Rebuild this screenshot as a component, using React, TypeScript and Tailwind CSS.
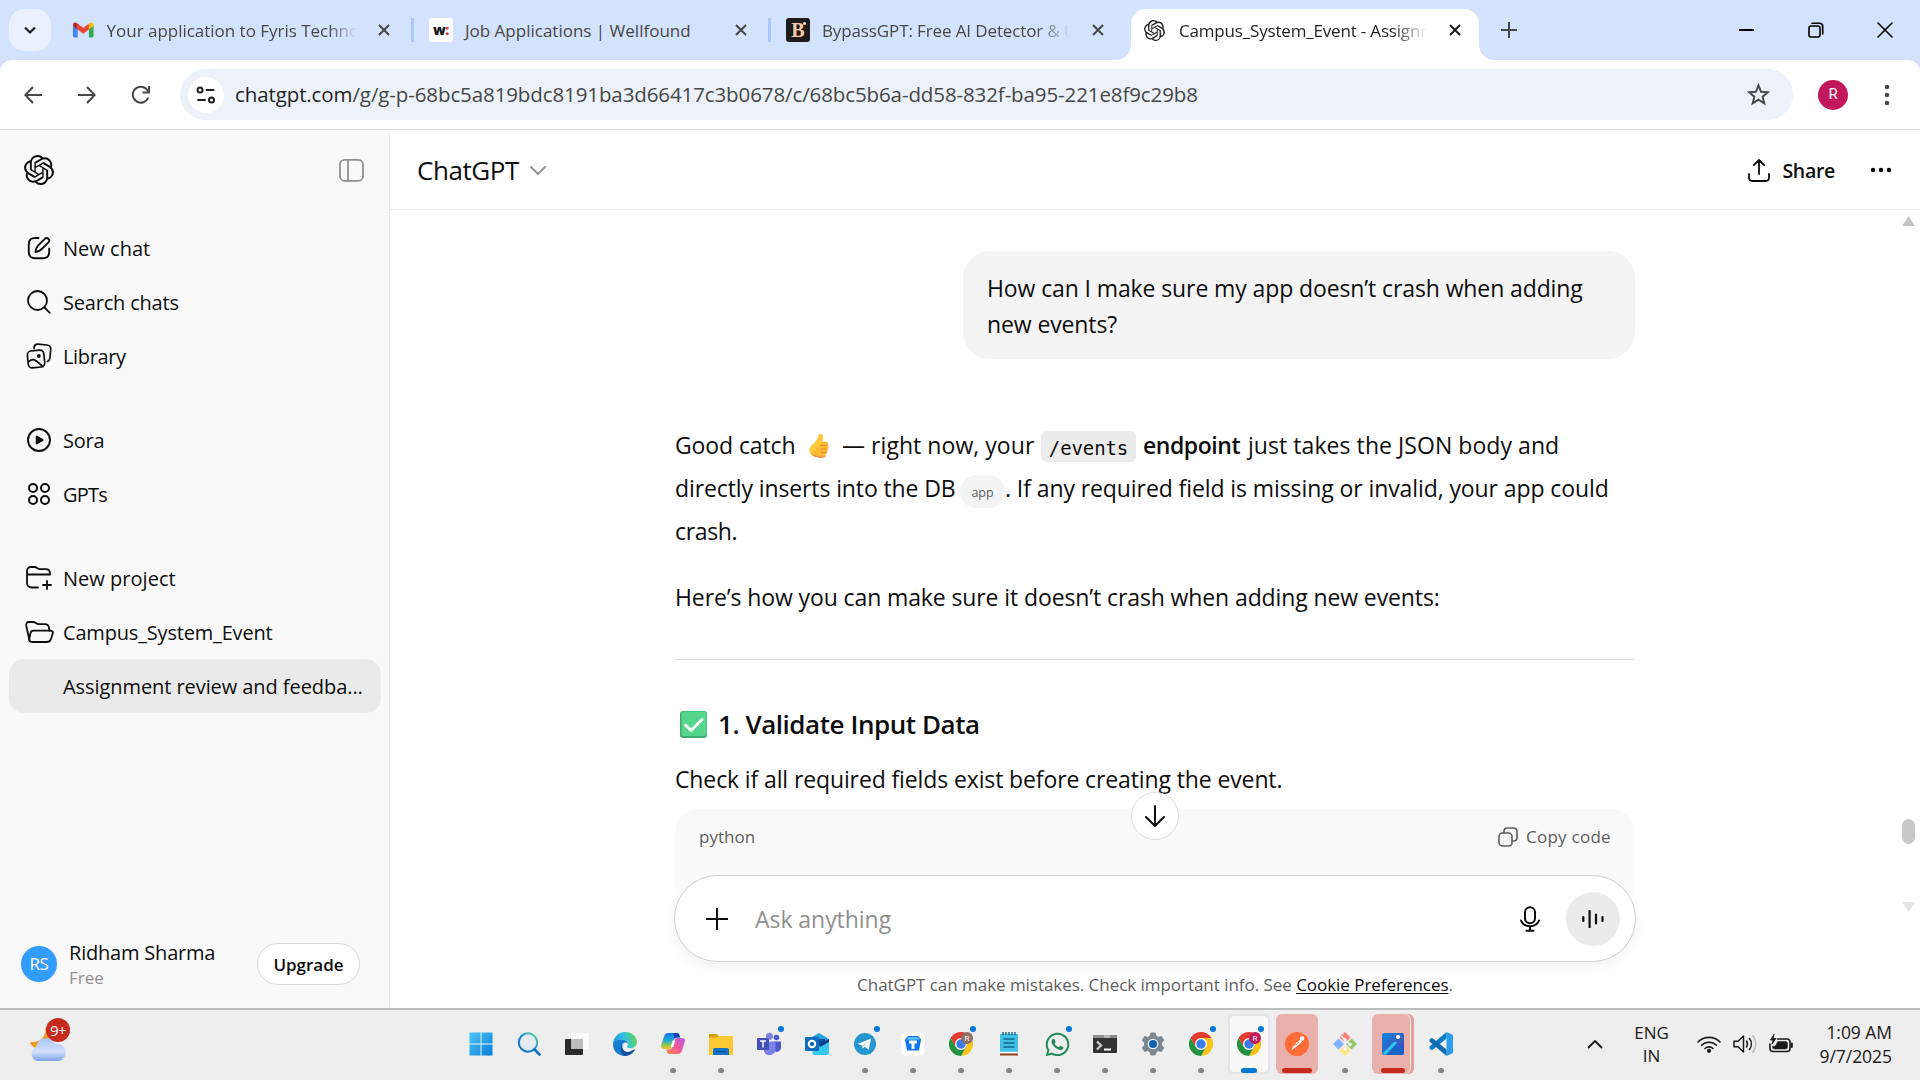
import React from 'react';
import { SiOpenai } from 'react-icons/si';
import { FaWhatsapp } from 'react-icons/fa';

type IconProps = { className?: string; children?: React.ReactNode; box?: string; sw?: number };

function Svg({ className, children, box = '0 0 24 24', sw = 2 }: IconProps) {
  return (
    <svg viewBox={box} className={`block shrink-0 ${className ?? ''}`} fill="none" stroke="currentColor" strokeWidth={sw} strokeLinecap="round" strokeLinejoin="round">
      {children}
    </svg>
  );
}

/* ---------- browser chrome ---------- */

const Cross = ({ className }: { className: string }) => (
  <Svg className={`size-3 ${className}`} box="0 0 12 12" sw={2}>
    <path d="M1 1l10 10M11 1L1 11" strokeLinecap="butt" />
  </Svg>
);

const Gmail = () => (
  <svg viewBox="0 0 22 16" className="block h-4 w-[22px]">
    <path d="M0 3v11.5C0 15.3.7 16 1.5 16H5V7z" fill="#4285f4" />
    <path d="M22 3v11.500C22 15.300 21.300 16 20.500 16H17V7z" fill="#34a853" />
    <path d="M5 1.200V7.500l6 4.500 6-4.500V1.200l-6 4.500z" fill="#ea4335" />
    <path d="M17 1.200V7.500l5-3.700V2.200C22 .200 19.800-.700 18.200.400z" fill="#fbbc04" />
    <path d="M0 2.200v1.600l5 3.700V1.200L3.800.400C2.200-.700 0 .200 0 2.200z" fill="#c5221f" />
  </svg>
);

function TabStrip() {
  return (
    <div className="flex h-[60px] bg-[#d3e3fd] pl-[9px] pt-[9px]">
      <div className="flex size-[42px] items-center justify-center rounded-[15px] bg-[#e9f0fe] text-[#1f1f1f]">
        <Svg className="h-2 w-3" box="0 0 12 8" sw={2.200}><path d="M1 1.500l5 5 5-5" strokeLinecap="butt" /></Svg>
      </div>
      <div className="ml-[22px] flex h-[42px] w-[341px] items-center text-[#474747]">
        <Gmail />
        <span className="ml-[13px] w-[254px] pt-0.5 whitespace-nowrap text-[17px] tracking-[-0.020px] [mask-image:linear-gradient(to_right,#000_88%,transparent_99%)]">Your application to Fyris Techno</span>
        <Cross className="ml-[19px]" />
        <span className="ml-[21px] h-6 w-[3px] bg-[#a8c7fa]" />
      </div>
      <div className="ml-[15px] flex h-[42px] w-[342px] items-center text-[#474747]">
        <span className="flex size-6 items-center justify-center rounded-[3px] bg-white text-[14px] leading-none font-extrabold tracking-[-0.500px] text-[#111]">w<span className="text-[#ec2e3a]">:</span></span>
        <span className="ml-3 w-[250px] pt-0.5 whitespace-nowrap text-[17px]">Job Applications | Wellfound</span>
        <Cross className="ml-5" />
        <span className="ml-[21px] h-6 w-[3px] bg-[#a8c7fa]" />
      </div>
      <div className="ml-[15px] flex h-[42px] w-[336px] items-center text-[#474747]">
        <span className="relative flex size-6 items-center justify-center rounded-[3px] bg-[#1d1b1c] font-['Liberation_Serif'] text-[20px] leading-none font-bold text-[#fbc8a5]">B<span className="absolute top-1 right-1 size-[3px] rounded-full bg-[#fbe0b0]" /></span>
        <span className="ml-3 w-[251px] pt-0.5 whitespace-nowrap text-[17px] tracking-[-0.120px] [mask-image:linear-gradient(to_right,#000_85%,transparent_99%)]">BypassGPT: Free AI Detector &amp; U</span>
        <Cross className="ml-[19px]" />
      </div>
      <div className="relative ml-[9px] flex h-[51px] w-[348px] rounded-t-[15px] bg-white text-[#1f1f1f]">
        <span className="absolute bottom-0 -left-[15px] size-[15px] bg-[radial-gradient(circle_at_0_0,#d3e3fd_14.500px,#fff_15px)]" />
        <span className="absolute -right-[15px] bottom-0 size-[15px] bg-[radial-gradient(circle_at_100%_0,#d3e3fd_14.500px,#fff_15px)]" />
        <div className="flex h-[42px] items-center">
          <SiOpenai className="ml-[13px] size-[21px]" />
          <span className="ml-[14px] w-[251px] pt-0.5 whitespace-nowrap text-[17px] tracking-[-0.180px] [mask-image:linear-gradient(to_right,#000_85%,transparent_99%)]">Campus_System_Event - Assignn</span>
          <Cross className="ml-[19px]" />
        </div>
      </div>
      <div className="ml-[22px] flex h-[42px] items-center text-[#474747]">
        <Svg className="size-4" box="0 0 16 16" sw={2}><path d="M8 0v16M0 8h16" strokeLinecap="butt" /></Svg>
      </div>
      <div className="mr-[27px] ml-auto flex h-[42px] items-center text-black">
        <span className="h-0.5 w-[15px] bg-black" />
        <Svg className="ml-[54px] size-4" box="0 0 16 16" sw={1.600}>
          <rect x="1" y="4" width="11" height="11" rx="2" />
          <path d="M4 1.200h7.500a3.200 3.200 0 0 1 3.200 3.200V12" />
        </Svg>
        <Svg className="ml-[53px] size-4" box="0 0 16 16" sw={1.600}><path d="M1 1l14 14M15 1L1 15" /></Svg>
      </div>
    </div>
  );
}

function Toolbar() {
  return (
    <div className="border-b border-white bg-[#d3e3fd]">
      <div className="flex h-[70px] items-center rounded-t-xl border-b border-[#dddddd] bg-white text-[#474747]">
        <Svg className="ml-6 size-[18px]" box="0 0 18 18" sw={2}><path d="M18 9H1.500M9 1L1.300 9 9 17" strokeLinecap="butt" strokeLinejoin="miter" /></Svg>
        <Svg className="ml-9 size-[18px]" box="0 0 18 18" sw={2}><path d="M0 9h16.500M9 1l7.700 8L9 17" strokeLinecap="butt" strokeLinejoin="miter" /></Svg>
        <Svg className="ml-9 size-[18px]" box="0 0 18 18" sw={2}>
          <path d="M16.300 11.500A8 8 0 1 1 15.500 4.300L17 6" strokeLinecap="butt" />
          <path d="M17 0v6.500h-6.500" strokeLinecap="butt" strokeLinejoin="miter" />
        </Svg>
        <div className="ml-[30px] flex h-[51px] w-[1613px] items-center rounded-full bg-[#ecf1fa]">
          <span className="ml-2 flex size-9 items-center justify-center rounded-full bg-white text-[#1f1f1f]">
            <Svg className="h-[18px] w-5" box="0 0 20 18" sw={2}>
              <circle cx="4" cy="4" r="2.500" /><path d="M10.500 4h7M2 14h7" /><circle cx="15.500" cy="14" r="2.500" />
            </Svg>
          </span>
          <span className="ml-[11px] text-[20.500px] tracking-[-0.105px] whitespace-nowrap text-[#474747]"><span className="text-[#1f1f1f]">chatgpt.com</span>/g/g-p-68bc5a819bdc8191ba3d66417c3b0678/c/68bc5b6a-dd58-832f-ba95-221e8f9c29b8</span>
          <Svg className="mr-[23px] ml-auto size-[23px]" box="0 0 24 24" sw={2}>
            <path d="M12 2.500l2.700 6.700 7.100.500-5.500 4.600 1.800 7L12 17.400l-6.100 3.900 1.800-7-5.500-4.600 7.100-.500z" strokeLinejoin="miter" />
          </Svg>
        </div>
        <span className="ml-[25px] flex size-[30px] items-center justify-center rounded-full bg-[#c2185b] font-['Roboto'] text-[15px] text-white">R</span>
        <svg viewBox="0 0 6 22" className="ml-9 h-[22px] w-1.5" fill="#474747"><circle cx="3" cy="3" r="2.300" /><circle cx="3" cy="11" r="2.300" /><circle cx="3" cy="19" r="2.300" /></svg>
      </div>
    </div>
  );
}

/* ---------- sidebar ---------- */

const EditIcon = () => (
  <Svg className="size-6" sw={1.900}>
    <path d="M11.500 2H8C4 2 1.800 4 1.800 8v8c0 4 2.200 6.200 6.200 6.200h8c4 0 6.200-2.200 6.200-6.200v-3.500" />
    <path d="M8.500 16c.200-3 .900-4.700 2.500-6.300l6.800-6.900a2.500 2.500 0 0 1 3.600 3.600l-6.900 6.800C12.900 14.800 11.300 15.700 8.500 16z" />
  </Svg>
);
const SearchIcon = () => (<Svg className="size-6" sw={1.800}><circle cx="10.500" cy="10.500" r="9.500" /><path d="M17.500 17.500l5.300 5.300" /></Svg>);
const LibraryIcon = () => (
  <Svg className="size-[26px]" box="0 0 26 26" sw={1.700}>
    <rect x="1.800" y="7.500" width="16.500" height="17" rx="4" transform="rotate(-6 10 16)" />
    <path d="M3 18.500c2.500-2.500 5.500-2.200 8 0l6 5M8 5.500V4.500C8.400 2 9.800 1 12 1.200l9 .8c3 .3 4 2 3.700 5l-.8 8c-.2 1.800-1 3-2.500 3.500" />
    <circle cx="12.800" cy="13" r="1.100" fill="currentColor" />
  </Svg>
);
const SoraIcon = () => (<Svg className="size-6" sw={1.900}><circle cx="12" cy="12" r="11" /><path d="M9.700 8.500v7l6-3.500z" fill="currentColor" /></Svg>);
const GptsIcon = () => (
  <Svg className="size-6" sw={2}><circle cx="6" cy="6" r="4" /><circle cx="18" cy="6" r="4" /><circle cx="6" cy="18" r="4" /><circle cx="18" cy="18" r="4" /></Svg>
);
const NewProjectIcon = () => (
  <Svg className="size-[26px]" box="0 0 26 26" sw={1.800}>
    <path d="M12 22.500H6c-3 0-5-1.500-5-4.500V6c0-2.500 1.500-4 4-4h3.500c1.500 0 2 .500 3 1.300 1 .700 1.500.900 3 .900h5c3 0 4.500 1.500 4.500 4.300V9.500H1" />
    <path d="M21 16v8M17 20h8" />
  </Svg>
);
const FolderIcon = () => (
  <Svg className="h-[22px] w-[29px]" box="0 0 29 22" sw={1.800}>
    <path d="M4.500 19.500L1.200 4.500C.900 2.500 2 1 4 1h4c1.500 0 2 .400 3 1.100 1 .800 1.800 1 3 1h6c2.500 0 3.600 1.300 4 3.500l.500 3" />
    <path d="M8.500 9.600h16.800c2 0 2.900 1.200 2.400 2.900l-1.700 5.500c-.700 2.100-1.900 3-4 3H7.500c-2.500 0-3.700-1.400-3.200-3.500l1.200-5.400c.400-1.700 1.300-2.500 3-2.500z" />
  </Svg>
);

function Item({ icon, label, gap, track }: { icon?: React.ReactNode; label: string; gap?: string; track?: string }) {
  return (
    <div className={`flex h-[54px] items-center ${gap ?? ''}`}>
      <span className="ml-[23px] flex w-8 justify-center text-[#0d0d0d]">{icon}</span>
      <span className={`ml-2 pt-px text-[20px] whitespace-nowrap text-[#0d0d0d] ${track ?? 'tracking-[-0.200px]'}`}>{label}</span>
    </div>
  );
}

function Sidebar() {
  return (
    <aside className="flex h-[877px] w-[390px] flex-col border-r border-[#ececec] bg-[#f9f9f9]">
      <div className="mt-[21px] flex h-9 items-center justify-between pr-[25px] pl-6 text-[#0d0d0d]">
        <SiOpenai className="size-[30px]" />
        <Svg className="size-[25px] text-[#8f8f8f]" box="0 0 25 24" sw={1.800}><rect x="1" y="1.300" width="23" height="21" rx="4.500" /><path d="M9 1.500v21" /></Svg>
      </div>
      <nav className="mt-[33px] flex flex-col">
        <Item icon={<EditIcon />} label="New chat" track="tracking-[0.020px]" />
        <Item icon={<SearchIcon />} label="Search chats" />
        <Item icon={<LibraryIcon />} label="Library" track="tracking-[-0.350px]" />
        <Item icon={<SoraIcon />} label="Sora" gap="mt-[30px]" />
        <Item icon={<GptsIcon />} label="GPTs" gap="" track="tracking-[-0.800px]" />
        <Item icon={<NewProjectIcon />} label="New project" gap="mt-[30px]" track="tracking-[0.020px]" />
        <Item icon={<FolderIcon />} label="Campus_System_Event" track="tracking-[-0.180px]" />
        <div className="mx-[9px] mr-2 flex h-[54px] items-center rounded-[15px] bg-[#eaeaea] pl-[54px]">
          <span className="pt-px text-[20px] tracking-[-0.070px] whitespace-nowrap text-[#0d0d0d]">Assignment review and feedba...</span>
        </div>
      </nav>
      <div className="mt-auto mb-[14px] flex h-[60px] items-center pl-[21px]">
        <span className="flex size-9 items-center justify-center rounded-full bg-[#339cff] text-[17px] tracking-[-0.500px] text-white">RS</span>
        <div className="ml-3 w-[188px]">
          <div className="text-[20px] leading-[27px] tracking-[-0.200px] whitespace-nowrap text-[#0d0d0d]">Ridham Sharma</div>
          <div className="text-[17px] leading-[24px] text-[#8f8f8f]">Free</div>
        </div>
        <span className="flex h-[42px] w-[103px] items-center justify-center rounded-full border border-[#d9d9d9] bg-white pt-px text-[17px] font-semibold text-[#0d0d0d]">Upgrade</span>
      </div>
    </aside>
  );
}

/* ---------- conversation ---------- */

const Thumb = () => (
  <svg viewBox="0 0 20 25" className="inline-block h-[25px] w-5 align-[-4px]">
    <path d="M9.500 2.200C10 .400 13.500.200 14 3.500c.300 2-.500 4-.900 5.200h3.700c2.200 0 3 1.900 2 3.500 1.200 1.300.900 3-.300 3.800.700 1.500.200 2.900-1 3.500.200 2.800-1.500 4.500-5 4.500C5.500 24.500 1 22.800.600 18c-.400-4.500 3-6.200 5.400-8.500C8 7.500 8.900 4.500 9.500 2.200z" fill="#fdb931" />
    <path d="M9.500 2.200C10 .400 13.500.200 14 3.500c.300 2-.500 4-.900 5.200L9 13l-5 7c-2-.500-3.300-1.200-3.400-2-.400-4.500 3-6.200 5.400-8.500C8 7.500 8.900 4.500 9.500 2.200z" fill="#fdc93e" />
    <path d="M12 12.300h6.300M12 16h6.500M12 19.700h5.600" stroke="#e58a2c" strokeWidth="1" />
    <path d="M4 22c3 2.500 10 2.800 12.500 1" stroke="#f08a4c" strokeWidth="1.500" fill="none" />
  </svg>
);

const CheckMark = () => (
  <svg viewBox="0 0 27 27" className="block size-[27px]">
    <rect width="27" height="27" rx="3" fill="#44a873" /><rect x="1.500" y="0.500" width="25" height="24.500" rx="2.500" fill="#56d68c" />
    <path d="M5.500 14l5.500 5.500L22 8.500" stroke="#fff" strokeWidth="2.800" fill="none" strokeLinecap="round" strokeLinejoin="round" />
  </svg>
);

function Composer() {
  return (
    <div className="relative -ml-px flex h-[87px] w-[962px] items-center rounded-full border border-[#cfcfcf] bg-white shadow-[0_6px_12px_rgba(0,0,0,0.05)]">
      <Svg className="ml-[31px] size-[22px] text-[#0d0d0d]" box="0 0 22 22" sw={2}><path d="M11 0v22M0 11h22" strokeLinecap="butt" /></Svg>
      <span className="ml-[27px] pt-0.5 text-[23px] tracking-[-0.050px] text-[#8f8f8f]">Ask anything</span>
      <Svg className="ml-auto h-[26px] w-5 text-[#0d0d0d]" box="0 0 20 26" sw={2}>
        <rect x="5" y="1.200" width="10" height="16" rx="5" /><path d="M1 14.500c1.500 3.800 5 5.700 9 5.700s7.500-1.900 9-5.700M10 20.200V24.500M6.500 24.700h7" />
      </Svg>
      <span className="mr-[15px] ml-[26px] flex size-[54px] items-center justify-center rounded-full bg-[#ebebeb]">
        <Svg className="h-[18px] w-[22px] text-[#0d0d0d]" box="0 0 22 18" sw={2.200}><path d="M1.300 7v4M7.600 1v16M14 4.500v9M20.500 7v4" /></Svg>
      </span>
      <span className="absolute -top-[84px] left-[456px] flex size-12 items-center justify-center rounded-full border border-[#dedede] bg-white text-[#0d0d0d]">
        <Svg className="h-[22px] w-5" box="0 0 20 22" sw={2}><path d="M10 1v20M1 12l9 9 9-9" strokeLinejoin="miter" /></Svg>
      </span>
    </div>
  );
}

function Conversation() {
  return (
    <main className="flex h-[877px] flex-1 flex-col bg-white text-[#0d0d0d]">
      <header className="flex h-[79px] items-center border-b border-[#ececec] pl-[27px]">
        <span className="pt-px text-[26px] tracking-[-0.450px]">ChatGPT</span>
        <Svg className="ml-[11px] h-[9px] w-4 text-[#8f8f8f]" box="0 0 16 9" sw={1.800}><path d="M1 1l7 7 7-7" /></Svg>
        <Svg className="ml-auto h-[23px] w-[22px]" box="0 0 22 23" sw={1.800}><path d="M1 15v3.500C1 20.800 2.200 22 4.500 22h13c2.300 0 3.500-1.200 3.500-3.500V15M11 15V1.200M5.800 6.200L11 1l5.200 5.200" /></Svg>
        <span className="ml-3 pt-px text-[19.500px] font-semibold tracking-[-0.300px]">Share</span>
        <svg viewBox="0 0 22 6" className="mr-7 ml-[35px] h-1.5 w-[22px]"><circle cx="3" cy="3" r="2.200" /><circle cx="11" cy="3" r="2.200" /><circle cx="19" cy="3" r="2.200" /></svg>
      </header>
      <div className="flex">
        <div className="ml-[285px] flex w-[960px] flex-col">
          <div className="mt-[41px] h-[108px] w-[672px] self-end rounded-[27px] bg-[#f4f4f4] px-6 pt-[19px] text-[23px] leading-[36px] tracking-[-0.110px] whitespace-nowrap">
            <div>How can I make sure my app doesn’t crash when adding</div>
            <div>new events?</div>
          </div>
          <div className="mt-[65px] text-[23px] tracking-[-0.110px] whitespace-nowrap">
            <div className="flex h-[43px] items-center">
              <span className="w-[134px]">Good catch</span>
              <span className="w-[33px]"><Thumb /></span>
              <span className="w-[199px] tracking-[0.050px]">— right now, your</span>
              <span className="relative top-px flex h-[31px] w-[95px] items-center justify-center rounded-md bg-[#ececec] pt-1 font-['DejaVu_Sans_Mono'] text-[19px] tracking-[-0.100px]">/events</span>
              <span className="ml-[7px] w-[105px] font-semibold tracking-[-0.450px]">endpoint</span>
              <span className="tracking-[0.060px]">just takes the JSON body and</span>
            </div>
            <div className="flex h-[43px] items-center">
              <span className="w-[285px]">directly inserts into the DB</span>
              <span className="relative top-[3px] flex h-[33px] w-[45px] items-center justify-center rounded-full bg-[#f4f4f4] pt-1 text-[12.500px] font-medium text-[#5d5d5d]">app</span>
              <span className="tracking-[-0.090px]">. If any required field is missing or invalid, your app could</span>
            </div>
            <div className="flex h-[43px] items-center tracking-[-0.350px]">crash.</div>
            <div className="mt-[23px] flex h-[43px] items-center">Here’s how you can make sure it doesn’t crash when adding new events:</div>
          </div>
          <hr className="mt-10 border-[#dedede]" />
          <h3 className="mt-[46px] flex h-9 items-center pl-[5px] text-[26px] font-semibold tracking-[-0.450px] whitespace-nowrap"><CheckMark /><span className="ml-[11px]">1. Validate Input Data</span></h3>
          <p className="mt-4 h-[42px] text-[23px] leading-[42px] tracking-[-0.120px] whitespace-nowrap">Check if all required fields exist before creating the event.</p>
          <div className="mt-[9px] flex h-[66px] rounded-t-3xl bg-[#f9f9f9] px-6 text-[17px] text-[#5d5d5d]">
            <div className="flex h-14 flex-1 items-center">
              <span>python</span>
              <Svg className="ml-auto size-5" box="0 0 20 20" sw={1.600}><rect x="1" y="6" width="13" height="13" rx="3.500" /><path d="M6 6V4.500C6 2.200 7.200 1 9.500 1h6C17.800 1 19 2.200 19 4.500v6c0 2.300-1.200 3.500-3.500 3.500H14" /></Svg>
              <span className="ml-2 w-[85px] tracking-[0.250px] whitespace-nowrap">Copy code</span>
            </div>
          </div>
          <div className="h-[87px] bg-[linear-gradient(#f9f9f9,#fff_50%)]"><Composer /></div>
          <div className="flex h-[45px] items-center justify-center text-[17px] tracking-[-0.040px] whitespace-nowrap text-[#5d5d5d]">
            <span>ChatGPT can make mistakes. Check important info. See <span className="text-[#0d0d0d] underline underline-offset-2">Cookie Preferences</span>.</span>
          </div>
        </div>
        <div className="mr-[5px] ml-auto flex w-[13px] flex-col items-center">
          <svg viewBox="0 0 13 10" className="mt-[6px] h-[10px] w-[13px]"><path d="M6.500 0L13 10H0z" fill="#c4c4c4" /></svg>
          <span className="mt-[593px] h-[25px] w-[13px] rounded-full bg-[#c8c8c8]" />
          <svg viewBox="0 0 13 10" className="mt-[58px] h-[10px] w-[13px]"><path d="M6.500 10L13 0H0z" fill="#e6e6e6" /></svg>
        </div>
      </div>
    </main>
  );
}

/* ---------- taskbar ---------- */

const ico = 'block size-6';

const Windows = () => (
  <svg viewBox="0 0 24 24" className={ico}>
    <defs><linearGradient id="win" x1="0" y1="0" x2="1" y2="1" gradientUnits="objectBoundingBox"><stop offset="0" stopColor="#4cc8fb" /><stop offset="1" stopColor="#0a7bd6" /></linearGradient></defs>
    <path d="M.500.500h11v11H.500zM12.500.500h11v11h-11zM.500 12.500h11v11H.500zM12.500 12.500h11v11h-11z" fill="url(#win)" />
  </svg>
);
const Search = () => (
  <svg viewBox="0 0 24 24" className={ico}>
    <defs><linearGradient id="srch" x1="1" y1="0" x2="0" y2="1"><stop offset="0" stopColor="#6fe08a" /><stop offset="0.450" stopColor="#1f8ad0" /><stop offset="1" stopColor="#0d6cc4" /></linearGradient></defs>
    <circle cx="11" cy="10.500" r="9.200" fill="#e4eaf0" stroke="url(#srch)" strokeWidth="2" /><path d="M17.500 17.500l5 5" stroke="#0f6fc5" strokeWidth="2.600" strokeLinecap="round" />
  </svg>
);
const TaskView = () => (
  <svg viewBox="0 0 24 24" className={ico}>
    <rect x="0" y="7" width="18" height="16" rx="1" fill="#2b2b2b" /><rect x="6" y="1" width="18" height="16" rx="1" fill="#fafafa" /><rect x="6" y="7" width="12" height="10" fill="#bdbdbd" />
  </svg>
);
const Edge = () => (
  <svg viewBox="0 0 24 24" className={ico}>
    <defs><linearGradient id="edg" x1="0" y1="0.500" x2="1" y2="0.300"><stop offset="0" stopColor="#199be2" /><stop offset="0.500" stopColor="#35c1e0" /><stop offset="1" stopColor="#62d84a" /></linearGradient></defs>
    <path d="M12 0c7 0 12 4.500 12 10 0 3.800-2.800 6.300-6.500 6.300-2.500 0-3.800-1-3.500-2 .200-.700.900-1.200.900-2.800C14.900 9 12.300 7.500 9 7.500 4.500 7.500 1 9.500 0 12.500 0 5.500 5.400 0 12 0z" fill="url(#edg)" />
    <path d="M0 12.500c.500-3.300 4.500-5 8.500-5 4 0 6.200 2 6.400 4-1-1.200-3.500-1.500-5 .3-2 2.400-1.200 8.200 5.500 10.800-1 .900-2.200 1.400-3.400 1.400C5 24 0 19 0 12.500z" fill="#1680d0" />
    <path d="M9.500 12.500c-1.300 5 3 9 8 6.800 1.800-.8 3.600-2 4.700-2-1.900 4-5.900 6.700-10.200 6.700-4-1-6-7.500-2.500-11.500z" fill="#104f9d" />
  </svg>
);
const Copilot = () => (
  <svg viewBox="0 0 24 24" className={ico}>
    <defs>
      <linearGradient id="cpa" x1="0" y1="0" x2="0" y2="1"><stop offset="0" stopColor="#1273e6" /><stop offset="0.450" stopColor="#1aa8d8" /><stop offset="0.750" stopColor="#8fc94b" /><stop offset="1" stopColor="#f2c52c" /></linearGradient>
      <linearGradient id="cpb" x1="1" y1="0" x2="0" y2="1"><stop offset="0" stopColor="#b45be8" /><stop offset="0.500" stopColor="#f0589b" /><stop offset="1" stopColor="#fb8b3c" /></linearGradient>
    </defs>
    <path d="M7 1h9c1.500 0 2 1 2.500 2.500l.700 2h-3c-2 0-3 1-3.500 2.800l-1.900 6c-.600 1.800-1.500 2.700-3.300 2.700H3c-2.500 0-3.500-1.500-2.700-4L3 4.500C3.700 2.200 5 1 7 1z" fill="url(#cpa)" />
    <path d="M17 22H8.500C7 22 6.300 21 5.800 19.500l-.600-2h2.500c2 0 3-1 3.600-2.800l1.900-6C13.800 6.800 14.700 6 16.500 6H21c2.500 0 3.500 1.500 2.700 4L21 18.500c-.700 2.300-2 3.500-4 3.500z" fill="url(#cpb)" />
    <path d="M13 1h3c1.500 0 2 1 2.500 2.500l.700 2h-3c-1.400 0-2.300.500-2.900 1.500z" fill="#1741b0" />
    <path d="M11.700 8.500h2.600l-2 6.500H9.700z" fill="#fff" />
  </svg>
);
const Explorer = () => (
  <svg viewBox="0 0 24 24" className={ico}>
    <path d="M0 2h7.500l2.500 2.500V8H0z" fill="#d99b09" /><path d="M0 5.500h8.500l1.800-1.500H24v19H0z" fill="#fcc935" />
    <path d="M4 18a2 2 0 0 1 2-2h12a2 2 0 0 1 2 2v5H4z" fill="#1272c4" /><path d="M7 19.500h10" stroke="#0a4f96" strokeWidth="1" />
  </svg>
);
const Teams = () => (
  <svg viewBox="0 0 24 24" className={ico}>
    <circle cx="19.500" cy="5.500" r="2.800" fill="#5059c9" /><circle cx="12.500" cy="4.200" r="3.500" fill="#7b83eb" /><path d="M17 9.500h7v6.500a4 4 0 0 1-7 2.500z" fill="#5059c9" />
    <path d="M7 9.500h11.500v8a6 6 0 0 1-11.500 2z" fill="#7b83eb" /><rect x="0" y="6" width="12" height="12" rx="1" fill="#464eb8" />
    <path d="M3 9h6M6 9v6.500" stroke="#fff" strokeWidth="1.500" />
  </svg>
);
const Outlook = () => (
  <svg viewBox="0 0 24 24" className={ico}>
    <path d="M5 6l9-5 10 6v6H5z" fill="#28a0e0" /><path d="M5 7h15v9H5z" fill="#0f4fa0" /><path d="M8 17L24 9v11.500a2.500 2.500 0 0 1-2.500 2.500H10a2.500 2.500 0 0 1-2.500-2.500z" fill="#35c8f0" />
    <path d="M13 12l11-5v3l-9 5z" fill="#0a3f8c" /><rect x="0" y="5" width="14" height="14" rx="1" fill="#0f6cbd" /><circle cx="7" cy="12" r="3.200" fill="none" stroke="#fff" strokeWidth="2" />
  </svg>
);
const Telegram = () => (
  <svg viewBox="0 0 24 24" className={ico}>
    <circle cx="12" cy="12" r="11" fill="#2497cf" /><path d="M4.500 12l13.500-5.500-2.300 11.300-4-3-2 2-.500-3.300z" fill="#fff" /><path d="M9.200 13.500L16 8.500l-5.200 5.800" fill="#b7d9ec" />
  </svg>
);
const Store = () => (
  <svg viewBox="0 0 24 24" className={ico}>
    <rect x="0.500" y="0.500" width="23" height="23" rx="4" fill="#fff" />
    <path d="M7 4h10l3 3.500-2 11H6l-2-11z" fill="#0a77f0" /><path d="M5.500 7.500L7.500 5.200h9l2 2.300z" fill="#6cc7fb" />
    <path d="M8 8.500h8v3h-2.500V17h-3v-5.500H8z" fill="#fff" />
  </svg>
);
function Chrome({ badge }: { badge?: string }) {
  return (
    <svg viewBox="0 0 24 24" className={ico}>
      <path d="M12 12V6h10.400A12 12 0 0 1 12 24l5.200-9z" fill="#fbc116" /><path d="M12 12l5.200 3L12 24A12 12 0 0 1 1.600 6l5.200 9z" fill="#229342" />
      <path d="M12 6h10.400A12 12 0 0 0 1.600 6l5.200 9z" fill="#e33b2e" />
      <circle cx="12" cy="12" r="6" fill="#fff" /><circle cx="12" cy="12" r="4.700" fill="#3b7ded" />
      {badge && <><circle cx="18" cy="6" r="6" fill={badge} /><text x="18" y="8.800" textAnchor="middle" fontSize="8" fill="#fff" fontFamily="Roboto">R</text></>}
    </svg>
  );
}
const Notepad = () => (
  <svg viewBox="0 0 24 24" className={ico}>
    <rect x="3" y="2" width="18" height="19" fill="#3fc0e4" /><path d="M6 0v3M9 0v3M12 0v3M15 0v3M18 0v3" stroke="#17647f" strokeWidth="1.500" />
    <path d="M6.500 7h11M6.500 11h11M6.500 15h11" stroke="#11678c" strokeWidth="1.500" /><path d="M3 20.500h18" stroke="#fff" strokeWidth="1.500" /><path d="M3 22.500h18" stroke="#8b4513" strokeWidth="2" />
  </svg>
);
const Terminal = () => (
  <svg viewBox="0 0 24 24" className={ico}>
    <rect x="0" y="3" width="24" height="18" rx="1" fill="#333" /><path d="M0 6V4.500Q0 3 1.500 3h21Q24 3 24 4.500V6z" fill="#8c8c8c" /><path d="M11 3h6v3h-6z" fill="#b5b5b5" />
    <path d="M4 9.500l4 4-4 4" stroke="#c9c9c9" strokeWidth="2.400" fill="none" /><path d="M11 17.500h7" stroke="#fff" strokeWidth="2" />
  </svg>
);
const Settings = () => (
  <svg viewBox="0 0 24 24" className={ico}>
    <path d="M9.800 1h4.400l.800 3.200 2.200 1.200 3.200-.900 2.300 3.800L20.400 10.800v2.400l2.300 2.500-2.300 3.800-3.200-.900-2.200 1.200-.800 3.200H9.800L9 19.800l-2.200-1.200-3.200.900-2.300-3.800 2.300-2.500v-2.400L1.300 8.300l2.300-3.800 3.200.900L9 4.200z" fill="#7d868f" strokeLinejoin="round" stroke="#7d868f" />
    <circle cx="12" cy="12" r="5.300" fill="#f2f4f6" /><circle cx="12" cy="12" r="4" fill="#1160ae" />
  </svg>
);
const Postman = () => (
  <svg viewBox="0 0 24 24" className={ico}>
    <circle cx="12" cy="12" r="12" fill="#ff6c37" />
    <path d="M8 14.500l5.500-5.800 2.600 1.900-4.800 4.200-5 3.700z" fill="#fff" /><circle cx="17" cy="6.500" r="2.300" fill="#fff" /><path d="M13 9.500l3-2 .8 2.300-2 1.700z" fill="#fff" />
    <path d="M9 14.300l5-4.300" stroke="#ff6c37" strokeWidth="0.600" />
  </svg>
);
const GitIcon = () => (
  <svg viewBox="0 0 24 24" className={ico}>
    <path d="M12 0l5.500 5.500L12 11 6.500 5.500z" fill="#f97f7f" /><path d="M18.500 6.500L24 12l-5.500 5.500L13 12z" fill="#93c967" /><path d="M5.500 6.500L11 12l-5.500 5.500L0 12z" fill="#80b3ff" /><path d="M12 13l5.500 5.500L12 24l-5.500-5.500z" fill="#ffe27a" />
    <path d="M8.500 4l3.500 4v9M12 9l5 3" stroke="#f5f5f5" strokeWidth="1.600" fill="none" /><circle cx="12" cy="8" r="1.800" fill="#f5f5f5" /><circle cx="12" cy="17" r="2" fill="#f5f5f5" /><circle cx="17" cy="12.500" r="1.800" fill="#f5f5f5" />
  </svg>
);
const Photos = () => (
  <svg viewBox="0 0 24 24" className={ico}>
    <defs><linearGradient id="pht" x1="0" y1="0" x2="1" y2="1"><stop offset="0" stopColor="#1189dd" /><stop offset="1" stopColor="#4a3fae" /></linearGradient></defs>
    <rect x="1" y="1" width="22" height="22" rx="2" fill="url(#pht)" /><path d="M3 23L13.500 10.500Q14.500 9.500 15.500 10.500L23 18v3q0 2-2 2z" fill="#1a63c8" /><path d="M1.500 21.500L12.500 10.500Q14.500 8.800 16.500 10.500L5 22.500q-2.500.8-3.500-1z" fill="#2fc3ee" /><circle cx="17" cy="5" r="2.100" fill="#fff" />
  </svg>
);
const VsCode = () => (
  <svg viewBox="0 0 24 24" className={ico}>
    <path d="M17.500 0L24 3v18l-6.500 3z" fill="#2a9df0" /><path d="M17.500 0v6.500L4 17.500 2.500 18 .500 16.500v-2z" fill="#0b7cc7" /><path d="M17.500 24v-6.500L4 6.500 2.500 6 .500 7.500v2z" fill="#0f6cb0" />
  </svg>
);

type Task = { icon: React.ReactNode; run?: boolean; dot?: boolean; state?: 'active' | 'alert' | 'stack' };
const tasks: Task[] = [
  { icon: <Windows /> }, { icon: <Search /> }, { icon: <TaskView /> }, { icon: <Edge /> },
  { icon: <Copilot />, run: true }, { icon: <Explorer />, run: true }, { icon: <Teams />, dot: true }, { icon: <Outlook /> },
  { icon: <Telegram />, run: true, dot: true }, { icon: <Store />, run: true }, { icon: <Chrome badge="#8d6e63" />, run: true, dot: true },
  { icon: <Notepad />, run: true }, { icon: <FaWhatsapp className="size-[27px] text-[#1f8a55]" />, run: true, dot: true }, { icon: <Terminal />, run: true },
  { icon: <Settings />, run: true }, { icon: <Chrome />, run: true, dot: true }, { icon: <Chrome badge="#c2185b" />, dot: true, state: 'active' },
  { icon: <Postman />, state: 'alert' }, { icon: <GitIcon />, run: true }, { icon: <Photos />, state: 'stack' }, { icon: <VsCode />, run: true },
];

function TaskButton({ icon, run, dot, state }: Task) {
  const skin =
    state === 'active' ? 'h-[60px] w-[42px] rounded-md border-2 border-[#e3e3e3] bg-[#f8f8f8]'
    : state === 'alert' ? 'h-[60px] w-[42px] rounded-md bg-[#e9b0ac]'
    : state === 'stack' ? 'h-[60px] w-[42px] rounded-md bg-[#e9b0ac] shadow-[inset_-3px_0_0_#e3a19c,inset_-4px_0_0_#f9e4e2]'
    : 'h-[60px] w-[42px]';
  const bar =
    state === 'active' ? 'h-[5px] w-4 rounded-full bg-[#0078d4] -bottom-px'
    : state === 'alert' ? 'h-[5px] w-[30px] rounded-full bg-[#c42b1c] bottom-px'
    : state === 'stack' ? 'h-[5px] w-6 rounded-full bg-[#c42b1c] bottom-px'
    : 'h-[5px] w-1.5 rounded-full bg-[#858585] bottom-px';
  return (
    <div className="flex w-12 justify-center">
      <div className={`relative flex items-center justify-center ${skin}`}>
        {icon}
        {dot && <span className={`absolute left-1/2 ml-[9px] size-1.5 rounded-full bg-[#0078d4] ${state ? 'top-[10px]' : 'top-[12px]'}`} />}
        {(run || state) && <span className={`absolute left-1/2 -translate-x-1/2 ${bar}`} />}
      </div>
    </div>
  );
}

function Taskbar() {
  return (
    <footer className="flex h-[72px] items-center border-t-2 border-[#bdbdbd] bg-[#eeeeee] pb-0.5 text-[#1a1a1a]">
      <div className="relative ml-[29px] h-14 w-[42px] pt-0.5">
        <svg viewBox="0 0 42 56" className="block h-14 w-[42px]">
          <defs><linearGradient id="cld" x1="0" y1="0" x2="0" y2="1"><stop offset="0" stopColor="#a9c6f5" /><stop offset="0.600" stopColor="#cfe0f8" /><stop offset="1" stopColor="#7da3ea" /></linearGradient></defs>
          <path d="M16 9c2 8-3 16-15 15 1 5 7 8 13 6s9-12 2-21z" fill="#f39a1e" />
          <path d="M8 43a7.500 7.500 0 0 1-1-14 10 10 0 0 1 19-3 8.600 8.600 0 0 1 4 17z" fill="url(#cld)" />
        </svg>
        <span className="absolute top-[2px] left-[17px] flex size-6 items-center justify-center rounded-full bg-[#c42b1c] text-[15px] tracking-[-0.500px] text-white">9+</span>
      </div>
      <div className="ml-[386px] flex">{tasks.map((t, i) => <TaskButton key={i} {...t} />)}</div>
      <Svg className="ml-[122px] h-[9px] w-4" box="0 0 16 9" sw={1.800}><path d="M1 8l7-7 7 7" strokeLinecap="butt" /></Svg>
      <div className="ml-[26px] w-[45px] text-center text-[17px] leading-[23px]">ENG<br />IN</div>
      <Svg className="ml-[23px] h-[18px] w-6" box="0 0 24 18" sw={1.600}>
        <path d="M1 7a15.500 15.500 0 0 1 22 0M4.500 10.300a10.600 10.600 0 0 1 15 0M8 13.500a5.700 5.700 0 0 1 8 0" /><circle cx="12" cy="15.800" r="1.300" fill="currentColor" />
      </Svg>
      <Svg className="ml-3 h-5 w-6" box="0 0 24 20" sw={1.500}>
        <path d="M1 7.200h4L10.500 2v16L5 12.800H1zM13.500 7c1.200 1.800 1.200 4.200 0 6M16.500 4.500c2.400 3.200 2.400 7.800 0 11" /><path d="M19.800 1.500c4 5 4 12 0 17" stroke="#bbb" />
      </Svg>
      <Svg className="ml-3 h-5 w-6" box="0 0 24 20" sw={1.600}>
        <path d="M8.500 5H18a3 3 0 0 1 3 3v6.500a3 3 0 0 1-3 3H4a3 3 0 0 1-3-3V10" /><path d="M9 7.500h7.500a2 2 0 0 1 2 2V13a2 2 0 0 1-2 2H5.500a2 2 0 0 1-2-2v-.800H6z" fill="currentColor" strokeWidth="0.500" /><path d="M22.800 9.500v3.500" strokeWidth="2" /><path d="M5 .500L1.500 6H4L3 10l4-5.500H4.500z" fill="currentColor" strokeWidth="0.800" />
      </Svg>
      <div className="mr-7 ml-auto text-right text-[17.500px] leading-[24px] tracking-[-0.050px] whitespace-nowrap">1:09 AM<br />9/7/2025</div>
    </footer>
  );
}

export default function App() {
  return (
    <div className="flex h-[1080px] w-[1920px] flex-col overflow-hidden bg-white font-['Open_Sans','Noto_Sans',sans-serif]">
      <TabStrip />
      <Toolbar />
      <div className="flex h-[877px]">
        <Sidebar />
        <Conversation />
      </div>
      <Taskbar />
    </div>
  );
}
